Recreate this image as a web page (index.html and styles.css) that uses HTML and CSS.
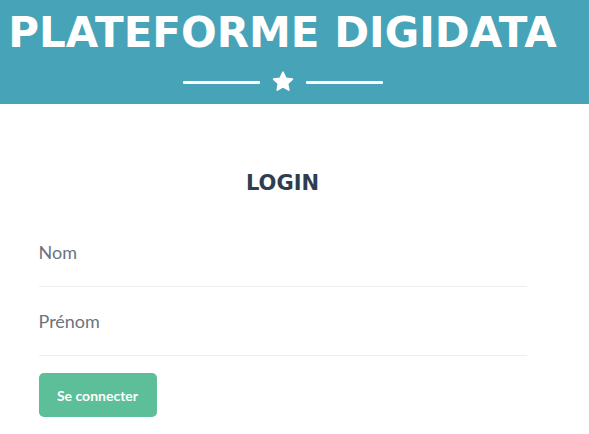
FILE: index.html
```html
<!DOCTYPE html>
<html lang="fr">
<head>
<meta charset="utf-8">
<title>Plateforme Digidata</title>
<link rel="stylesheet" href="styles.css">
</head>
<body>
<header class="masthead">
  <div class="masthead-inner">
    <h1 class="masthead-title">PLATEFORME DIGIDATA</h1>
    <div class="divider">
      <span class="divider-line"></span>
      <svg class="divider-star" viewBox="0 0 24 24" width="24" height="24" aria-hidden="true">
        <polygon points="12,2.2 14.9,8.3 21.4,9.1 16.6,13.6 17.8,20.1 12,16.9 6.2,20.1 7.4,13.6 2.6,9.1 9.1,8.3" fill="#fff" stroke="#fff" stroke-width="1.6" stroke-linejoin="round"/>
      </svg>
      <span class="divider-line"></span>
    </div>
  </div>
</header>
<div class="page">
  <main class="login">
    <h2 class="login-title">LOGIN</h2>
    <form class="login-form">
      <div class="field"><span class="field-label">Nom</span></div>
      <div class="field"><span class="field-label">Prénom</span></div>
      <button type="button" class="btn">Se connecter</button>
    </form>
  </main>
</div>
</body>
</html>
```
FILE: styles.css
```css
html, body {
  margin: 0;
  padding: 0;
  background: #fff;
}
.page {
  width: 565px;
}
.masthead {
  background: #47a3b8;
  height: 104px;
  box-sizing: border-box;
  padding-top: 12px;
}
.masthead-inner {
  width: 565px;
  text-align: center;
}
.masthead-title {
  margin: 0;
  font-family: "DejaVu Sans", sans-serif;
  font-weight: bold;
  font-size: 42px;
  line-height: 1;
  letter-spacing: 0;
  color: #fff;
  white-space: nowrap;
}
.divider {
  margin-top: 16px;
  display: flex;
  justify-content: center;
  align-items: center;
  gap: 11px;
}
.divider-line {
  width: 77px;
  height: 3px;
  border-radius: 1px;
  background: #fff;
}
.divider-star {
  display: block;
}
.login {
  width: 488px;
  margin: 0 auto;
  padding-top: 67px;
}
.login-title {
  margin: 0 0 22px;
  text-align: center;
  font-family: "DejaVu Sans", sans-serif;
  font-weight: bold;
  font-size: 21px;
  line-height: 1.2;
  color: #2c3e50;
}
.login-form {
  margin: 0;
}
.field {
  padding: 21px 0 20px;
  border-bottom: 1px solid #eeeeee;
  font-family: Lato, sans-serif;
  font-size: 18px;
  line-height: 27px;
  color: #6b747c;
}
.btn {
  margin-top: 17px;
  display: block;
  width: 118px;
  height: 44px;
  border: none;
  border-radius: 5px;
  background: #5cbf9a;
  color: #fff;
  font-family: Lato, sans-serif;
  font-weight: bold;
  font-size: 14px;
  padding: 0;
  cursor: pointer;
}
```
